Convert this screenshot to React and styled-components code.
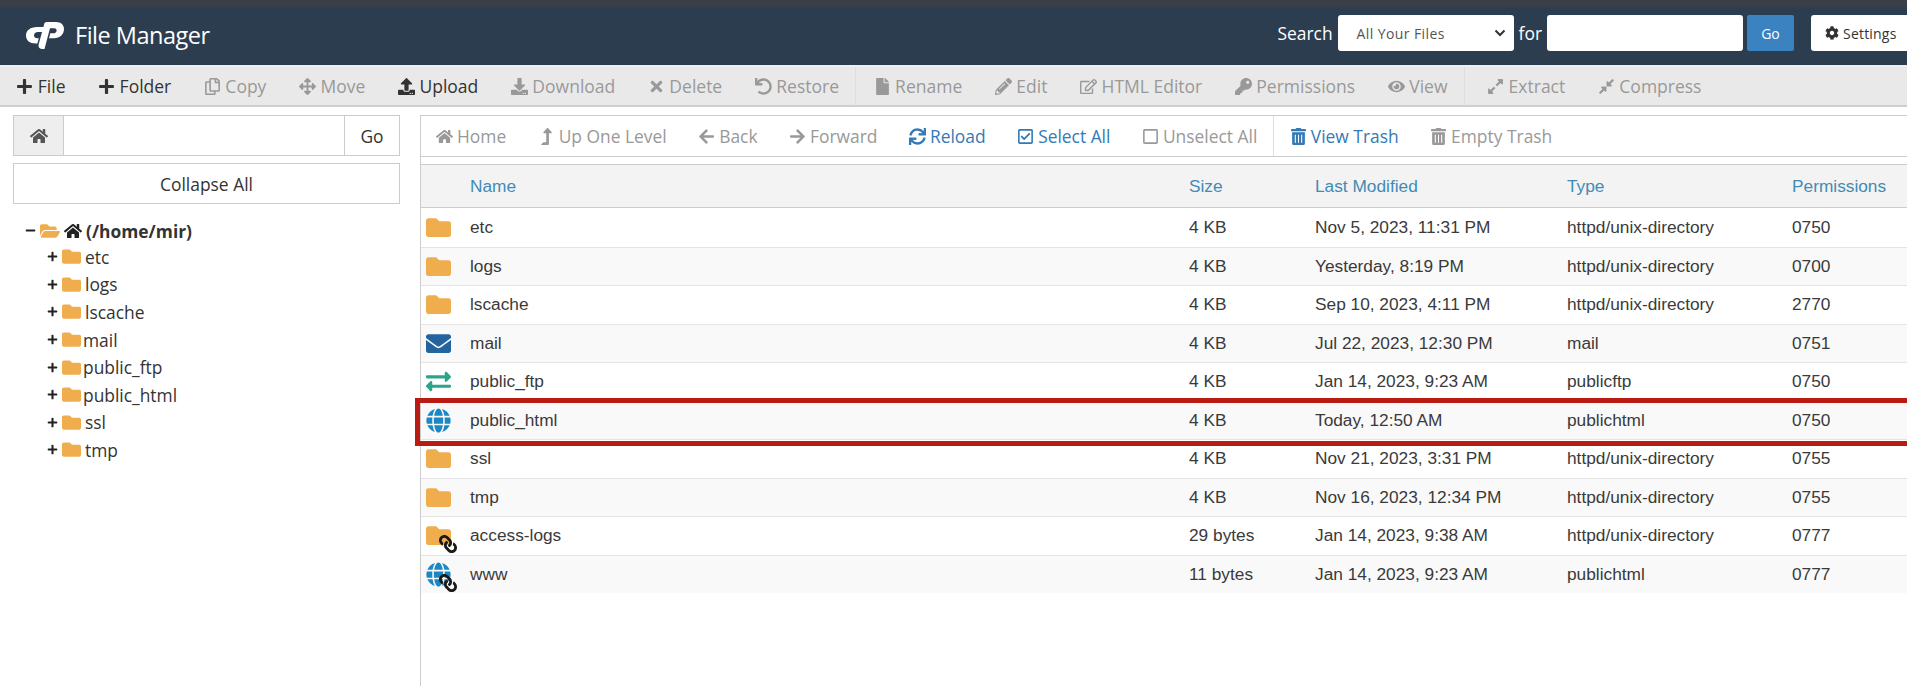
import React from "react";
import styled, { createGlobalStyle } from "styled-components";
import {
  FaArrowLeft,
  FaArrowRight,
  FaArrowsAlt,
  FaCog,
  FaCompressAlt,
  FaDownload,
  FaEnvelope,
  FaExchangeAlt,
  FaExpandAlt,
  FaEye,
  FaFile,
  FaFolder,
  FaFolderOpen,
  FaGlobe,
  FaHome,
  FaKey,
  FaLevelUpAlt,
  FaLink,
  FaMinus,
  FaPencilAlt,
  FaPlus,
  FaRegCheckSquare,
  FaRegCopy,
  FaRegEdit,
  FaRegSquare,
  FaSync,
  FaTimes,
  FaTrashAlt,
  FaUndo,
  FaUpload,
} from "react-icons/fa";

const GlobalStyle = createGlobalStyle`
  html, body {
    margin: 0;
    padding: 0;
    height: 100%;
    overflow: hidden;
    background: #fff;
  }
  #root {
    height: 100%;
  }
  * {
    box-sizing: border-box;
  }
`;

const Page = styled.div`
  position: relative;
  display: flex;
  flex-direction: column;
  height: 686px;
  width: 1907px;
  overflow: hidden;
  font-family: "Open Sans", sans-serif;
  color: #333;
`;

const TopBar = styled.header`
  display: flex;
  align-items: center;
  height: 65px;
  padding: 7px 0 0 26px;
  background: linear-gradient(#3b3f47 0, #3a3f48 5px, #2c3d50 9px);
  flex: none;
`;

const LogoTitle = styled.div`
  display: flex;
  align-items: center;
  gap: 11px;
  font-size: 23.5px;
  color: #fff;
  letter-spacing: -0.5px;
  margin-top: -2px;
  margin-right: auto;
`;

const SearchLabel = styled.span`
  color: #fff;
  font-size: 17.4px;
  margin: -7px 5px 0 ${(p) => p.$left || 0}px;
`;

const Field = styled.div`
  display: flex;
  align-items: center;
  justify-content: space-between;
  height: 36px;
  width: ${(p) => p.$width}px;
  margin-top: -6px;
  background: #fff;
  border-radius: 3px;
  padding: 0 8px 0 19px;
  color: #555;
  font-size: 14px;
  letter-spacing: 0.4px;
`;

const GoButton = styled.button`
  height: 36px;
  width: 47px;
  margin: -6px 0 0 4px;
  border: 0;
  border-radius: 2px;
  background: #3a82c0;
  color: #fff;
  font-family: inherit;
  font-size: 14px;
`;

const SettingsButton = styled.div`
  display: flex;
  align-items: center;
  gap: 4px;
  flex: none;
  height: 36px;
  width: 96px;
  margin: -6px 0 0 17px;
  padding-left: 14px;
  background: #fff;
  border-radius: 3px 0 0 3px;
  font-size: 14px;
  letter-spacing: 0.2px;
  color: #333;
  white-space: nowrap;
`;

const ActionBar = styled.div`
  display: flex;
  align-items: center;
  height: 42px;
  flex: none;
  background: #e9e9e9;
  border-top: 2px solid #eee;
  border-bottom: 2px solid #cfcfcf;
`;

const Group = styled.div`
  display: flex;
  align-items: center;
  height: 100%;
  padding-left: ${(p) => p.$pad || 0}px;
  border-left: 1px solid ${(p) => (p.$divided ? "#dedede" : "transparent")};
  margin-left: ${(p) => (p.$divided ? 0 : -1)}px;
`;

const Action = styled.span`
  display: flex;
  align-items: center;
  gap: 4.5px;
  padding: 0 16.3px;
  font-size: 17.5px;
  white-space: nowrap;
  color: ${(p) => (p.$tone === "off" ? "#999" : p.$tone === "link" ? "#337ab7" : "#333")};

  svg {
    flex: none;
    font-size: 17px;
  }
`;

const Body = styled.div`
  display: flex;
  flex: 1;
  min-height: 0;
  padding-top: 8px;
`;

const Sidebar = styled.aside`
  flex: none;
  width: 420px;
  padding: 0 20px 0 13px;
`;

const PathGroup = styled.div`
  display: flex;
  height: 41px;
  border: 1px solid #ccc;
  background: #fff;
`;

const PathHome = styled.div`
  display: flex;
  align-items: center;
  justify-content: center;
  flex: none;
  width: 50px;
  background: #eee;
  border-right: 1px solid #ccc;
  color: #555;
  font-size: 18px;
`;

const PathInput = styled.div`
  flex: 1;
`;

const PathGo = styled.div`
  display: flex;
  align-items: center;
  justify-content: center;
  flex: none;
  width: 55px;
  border-left: 1px solid #ccc;
  font-size: 17.4px;
`;

const CollapseButton = styled.div`
  display: flex;
  align-items: center;
  justify-content: center;
  height: 41px;
  margin-top: 7px;
  border: 1px solid #ccc;
  font-size: 17.4px;
`;

const Tree = styled.ul`
  list-style: none;
  margin: 14px 0 0;
  padding: 0 0 0 12px;
`;

const TreeRow = styled.li`
  display: flex;
  align-items: center;
  height: ${(p) => (p.$root ? 25 : 27.6)}px;
  padding-left: ${(p) => (p.$root ? 0 : 22)}px;
  font-size: 17.4px;
  font-weight: ${(p) => (p.$root ? 700 : 400)};
  white-space: nowrap;
`;

const TreeToggle = styled.span`
  display: flex;
  flex: none;
  width: 15px;
  font-size: 11px;
  color: #222;
`;

const TreeFolder = styled.span`
  display: flex;
  flex: none;
  color: #f0ad4e;
  font-size: ${(p) => (p.$root ? 20 : 19)}px;
  margin-right: ${(p) => (p.$root ? 4 : p.$tight ? 2 : 4)}px;
`;

const RootHome = styled.span`
  display: flex;
  flex: none;
  font-size: 18px;
  color: #222;
  margin-right: 4px;
`;

const Main = styled.main`
  flex: 1;
  min-width: 0;
  border-left: 1px solid #ccc;
`;

const NavBar = styled.div`
  display: flex;
  align-items: center;
  height: 42px;
  border-top: 1px solid #ccc;
  border-bottom: 1px solid #ccc;
  margin-left: -1px;

  ${Action} {
    padding: 0 15.5px 0 16px;
    gap: 4px;
    font-size: 17.4px;
  }
`;

const FileGrid = styled.div`
  margin-top: 7px;
`;

const gridColumns = "49px 719px 126px 252px 225px 115px";

const HeadRow = styled.div`
  display: grid;
  grid-template-columns: ${gridColumns};
  align-items: center;
  height: 44px;
  background: #f3f3f3;
  border-top: 1px solid #ccc;
  border-bottom: 1px solid #ccc;
  font-family: "Liberation Sans", Arial, sans-serif;
  font-size: 17.3px;
  color: #428bb5;
`;

const FileRow = styled.div`
  display: grid;
  grid-template-columns: ${gridColumns};
  align-items: center;
  height: 38.5px;
  background: ${(p) => (p.$odd ? "#f9f9f9" : "#fff")};
  border-top: 1px solid ${(p) => (p.$first ? "transparent" : "#e4e4e4")};
  font-family: "Liberation Sans", Arial, sans-serif;
  font-size: 17.3px;
  color: #3a3a3a;
  white-space: nowrap;
`;

const IconCell = styled.span`
  position: relative;
  display: flex;
  justify-content: center;
  margin-left: 4px;
  width: 26px;
  font-size: 25px;
  color: ${(p) => p.$color};
`;

const LinkBadge = styled.span`
  position: absolute;
  right: -6px;
  bottom: -5px;
  display: flex;
  font-size: 18px;
  color: #1a1a1a;
  transform: scaleX(-1);
`;

const Highlight = styled.div`
  position: absolute;
  left: 415px;
  top: 398px;
  width: 1520px;
  height: 48px;
  border: 5px solid #b81c13;
  pointer-events: none;
`;

const LogoMark = () => (
  <svg width="38" height="27" viewBox="0 0 38 27" fill="#fff" aria-hidden="true">
    <path d="M11 5h8l-1.400 5H12c-2.400 0-4 1.300-4 3.300 0 1.800 1.300 2.900 3.300 2.900h1.500L11.400 21.500H9.500C3.800 21.500 0 18.500 0 13.500 0 8.500 4.400 5 11 5z" />
    <path d="M20 0h10c5 0 8 2.800 8 7 0 5.500-4.200 9.300-10 9.300h-5l1.300-5h3c2 0 3.300-1.200 3.300-2.900 0-1.400-.900-2.200-2.600-2.200H24L18.500 27H17c-3.500 0-5-2-4.300-4.800L18.400 1.300 20 0z" />
  </svg>
);

const primaryActions = [
  {
    items: [
      [FaPlus, "File", "on"],
      [FaPlus, "Folder", "on"],
      [FaRegCopy, "Copy", "off"],
      [FaArrowsAlt, "Move", "off"],
      [FaUpload, "Upload", "on"],
      [FaDownload, "Download", "off"],
      [FaTimes, "Delete", "off"],
      [FaUndo, "Restore", "off"],
    ],
  },
  {
    pad: 1,
    items: [
      [FaFile, "Rename", "off"],
      [FaPencilAlt, "Edit", "off"],
      [FaRegEdit, "HTML Editor", "off"],
      [FaKey, "Permissions", "off"],
      [FaEye, "View", "off"],
    ],
  },
  {
    pad: 6,
    items: [
      [FaExpandAlt, "Extract", "off"],
      [FaCompressAlt, "Compress", "off"],
    ],
  },
];

const navActions = [
  {
    items: [
      [FaHome, "Home", "off"],
      [FaLevelUpAlt, "Up One Level", "off"],
      [FaArrowLeft, "Back", "off"],
      [FaArrowRight, "Forward", "off"],
      [FaSync, "Reload", "link"],
      [FaRegCheckSquare, "Select All", "link"],
      [FaRegSquare, "Unselect All", "off"],
    ],
  },
  {
    pad: 0,
    items: [
      [FaTrashAlt, "View Trash", "link"],
      [FaTrashAlt, "Empty Trash", "off"],
    ],
  },
];

const treeItems = ["etc", "logs", "lscache", "mail", "public_ftp", "public_html", "ssl", "tmp"];

const FOLDER = { Icon: FaFolder, color: "#f0ad4e" };
const GLOBE = { Icon: FaGlobe, color: "#1b87c4" };

const files = [
  { name: "etc", size: "4 KB", date: "Nov 5, 2023, 11:31 PM", type: "httpd/unix-directory", perms: "0750", ...FOLDER },
  { name: "logs", size: "4 KB", date: "Yesterday, 8:19 PM", type: "httpd/unix-directory", perms: "0700", ...FOLDER },
  { name: "lscache", size: "4 KB", date: "Sep 10, 2023, 4:11 PM", type: "httpd/unix-directory", perms: "2770", ...FOLDER },
  { name: "mail", size: "4 KB", date: "Jul 22, 2023, 12:30 PM", type: "mail", perms: "0751", Icon: FaEnvelope, color: "#23649e" },
  { name: "public_ftp", size: "4 KB", date: "Jan 14, 2023, 9:23 AM", type: "publicftp", perms: "0750", Icon: FaExchangeAlt, color: "#2aa58a" },
  { name: "public_html", size: "4 KB", date: "Today, 12:50 AM", type: "publichtml", perms: "0750", ...GLOBE },
  { name: "ssl", size: "4 KB", date: "Nov 21, 2023, 3:31 PM", type: "httpd/unix-directory", perms: "0755", ...FOLDER },
  { name: "tmp", size: "4 KB", date: "Nov 16, 2023, 12:34 PM", type: "httpd/unix-directory", perms: "0755", ...FOLDER },
  { name: "access-logs", size: "29 bytes", date: "Jan 14, 2023, 9:38 AM", type: "httpd/unix-directory", perms: "0777", linked: true, ...FOLDER },
  { name: "www", size: "11 bytes", date: "Jan 14, 2023, 9:23 AM", type: "publichtml", perms: "0777", linked: true, ...GLOBE },
];

function ActionGroups({ groups }) {
  return groups.map((group, i) => (
    <Group key={i} $pad={group.pad} $divided={i > 0}>
      {group.items.map(([Icon, label, tone]) => (
        <Action key={label} $tone={tone}>
          <Icon />
          {label}
        </Action>
      ))}
    </Group>
  ));
}

export default function App() {
  return (
    <>
      <GlobalStyle />
      <Page>
        <TopBar>
          <LogoTitle>
            <LogoMark />
            File Manager
          </LogoTitle>
          <SearchLabel>Search</SearchLabel>
          <Field $width={176}>
            All Your Files
            <svg width="12" height="8" viewBox="0 0 12 8" fill="none" stroke="#333" strokeWidth="2">
              <path d="M1.500 1.500 6 6l4.500-4.500" />
            </svg>
          </Field>
          <SearchLabel $left={5}>for</SearchLabel>
          <Field $width={196} />
          <GoButton>Go</GoButton>
          <SettingsButton>
            <FaCog />
            Settings
          </SettingsButton>
        </TopBar>

        <ActionBar>
          <ActionGroups groups={primaryActions} />
        </ActionBar>

        <Body>
          <Sidebar>
            <PathGroup>
              <PathHome>
                <FaHome />
              </PathHome>
              <PathInput />
              <PathGo>Go</PathGo>
            </PathGroup>
            <CollapseButton>Collapse All</CollapseButton>
            <Tree>
              <TreeRow $root>
                <TreeToggle>
                  <FaMinus />
                </TreeToggle>
                <TreeFolder $root>
                  <FaFolderOpen />
                </TreeFolder>
                <RootHome>
                  <FaHome />
                </RootHome>
                (/home/mir)
              </TreeRow>
              {treeItems.map((item) => (
                <TreeRow key={item}>
                  <TreeToggle>
                    <FaPlus />
                  </TreeToggle>
                  <TreeFolder $tight={item === "mail" || item.startsWith("public")}>
                    <FaFolder />
                  </TreeFolder>
                  {item}
                </TreeRow>
              ))}
            </Tree>
          </Sidebar>

          <Main>
            <NavBar>
              <ActionGroups groups={navActions} />
            </NavBar>
            <FileGrid>
              <HeadRow>
                <span />
                <span>Name</span>
                <span>Size</span>
                <span>Last Modified</span>
                <span>Type</span>
                <span>Permissions</span>
              </HeadRow>
              {files.map((file, i) => (
                <FileRow key={file.name} $odd={i % 2 === 1} $first={i === 0}>
                  <IconCell $color={file.color}>
                    <file.Icon />
                    {file.linked && (
                      <LinkBadge>
                        <FaLink />
                      </LinkBadge>
                    )}
                  </IconCell>
                  <span>{file.name}</span>
                  <span>{file.size}</span>
                  <span>{file.date}</span>
                  <span>{file.type}</span>
                  <span>{file.perms}</span>
                </FileRow>
              ))}
            </FileGrid>
          </Main>
        </Body>
        <Highlight />
      </Page>
    </>
  );
}
